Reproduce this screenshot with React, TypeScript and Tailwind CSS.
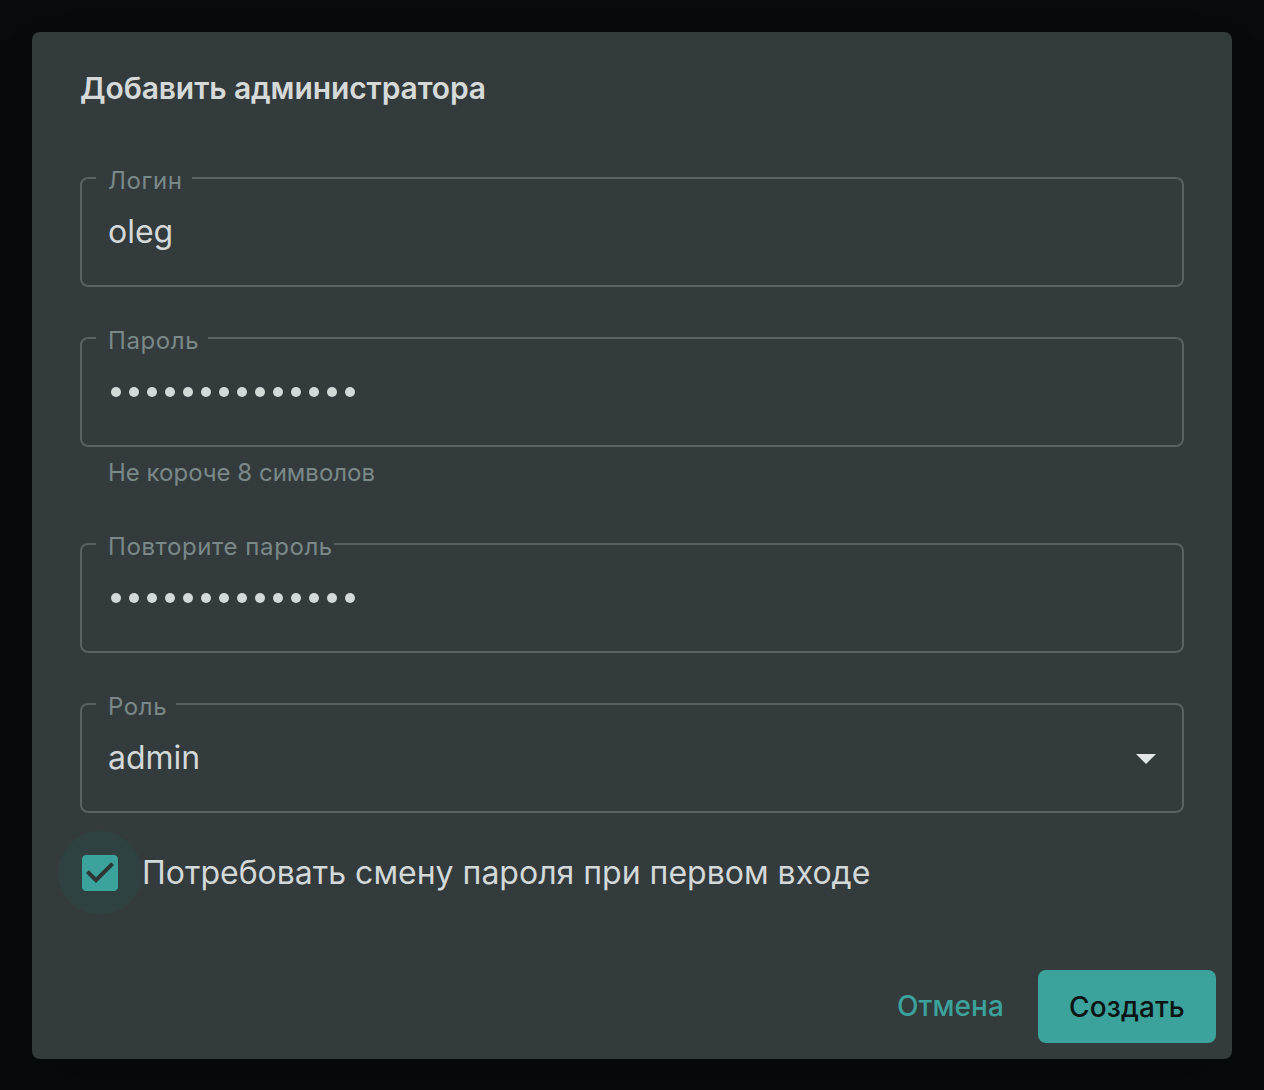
const font = { fontFamily: "Inter, 'Noto Sans', sans-serif" };

function Field({
  label,
  children,
  notchPad = "pr-[9px]",
}: {
  label: string;
  children: React.ReactNode;
  notchPad?: string;
}) {
  return (
    <div className="relative flex h-[110px] items-center rounded-[8px] border-2 border-[#596163] pl-[26px] pr-[12px]">
      <span
        className={`absolute -top-[14px] left-[14px] bg-[#343b3d] pl-[12px] ${notchPad} text-[24px] leading-[32px] tracking-[0.6px] text-[#7a8988]`}
      >
        {label}
      </span>
      {children}
    </div>
  );
}

function Dots() {
  return (
    <div className="flex items-center gap-[8px] pl-[3px]">
      {Array.from({ length: 14 }).map((_, i) => (
        <span key={i} className="h-[10px] w-[10px] rounded-full bg-[#d3d8d8]" />
      ))}
    </div>
  );
}

export default function App() {
  return (
    <div className="min-h-[1090px] bg-[#070b0e] p-[32px]" style={font}>
      <div className="flex h-[1027px] flex-col rounded-[8px] bg-[#343b3d] shadow-2xl">
        <h2 className="flex h-[80px] items-end px-[48px] text-[30px] font-semibold leading-[48px] tracking-[-0.1px] text-[#d5dad9]">
          Добавить администратора
        </h2>
        <div className="flex flex-col px-[48px] pt-[65px]">
          <Field label="Логин">
            <span className="text-[32px] leading-[40px] text-[#d3d8d8]">oleg</span>
          </Field>

          <div className="mt-[50px]">
            <Field label="Пароль">
              <Dots />
            </Field>
            <p className="mt-[6px] pl-[28px] text-[24px] leading-[40px] text-[#7a8988]">
              Не короче 8 символов
            </p>
          </div>

          <div className="mt-[50px]">
            <Field label="Повторите пароль" notchPad="pr-[1px]">
              <Dots />
            </Field>
          </div>

          <div className="mt-[50px]">
            <Field label="Роль">
              <span className="flex-1 text-[32px] leading-[40px] text-[#d3d8d8]">admin</span>
              <svg viewBox="0 0 24 24" className="h-[48px] w-[48px]" fill="#e2e6e6">
                <path d="M7 10l5 5 5-5z" />
              </svg>
            </Field>
          </div>

          <label className="-ml-[22px] mt-[18px] flex items-center">
            <span className="flex h-[84px] w-[84px] items-center justify-center rounded-full bg-[#2f4140]">
              <svg viewBox="0 0 24 24" className="h-[48px] w-[48px]">
                <rect x="4" y="4" width="16" height="16" fill="#2d3638" />
                <path
                  fill="#3ba39b"
                  d="M19 3H5c-1.11 0-2 .9-2 2v14c0 1.1.89 2 2 2h14c1.11 0 2-.9 2-2V5c0-1.1-.89-2-2-2zm-9 14l-5-5 1.41-1.41L10 14.17l7.59-7.59L19 8l-9 9z"
                />
              </svg>
            </span>
            <span className="text-[32px] leading-[40px] text-[#d3d8d8]">
              Потребовать смену пароля при первом входе
            </span>
          </label>
        </div>

        <div className="mt-auto flex items-center justify-end gap-[16px] p-[16px]">
          <button className="rounded-[8px] px-[18px] text-[28px] font-medium leading-[73px] tracking-[0.1px] text-[#3ba39b]">
            Отмена
          </button>
          <button className="h-[73px] w-[178px] rounded-[8px] bg-[#3ba39b] text-[28px] font-medium tracking-[0.1px] text-[#0b1314]">
            Создать
          </button>
        </div>
      </div>
    </div>
  );
}
